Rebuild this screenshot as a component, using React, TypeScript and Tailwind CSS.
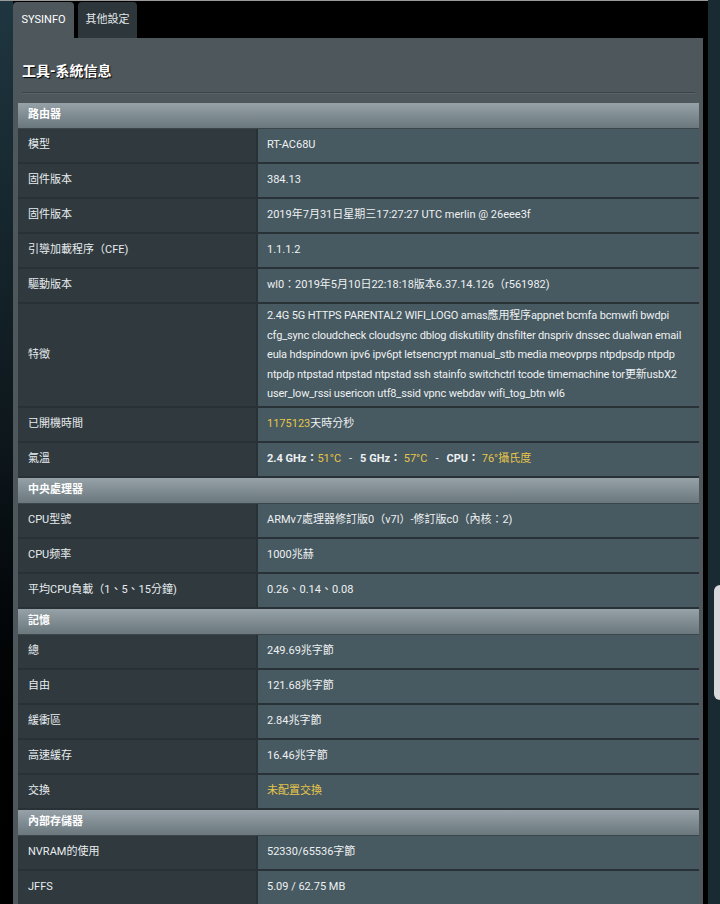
import type { ReactNode } from "react";

type Row = { label: string; value: ReactNode; tall?: boolean };
type Section = { title: string; rows: Row[] };

const Y = ({ children }: { children: ReactNode }) => <span className="text-[#e6c64a]">{children}</span>;

const SECTIONS: Section[] = [
  {
    title: "路由器",
    rows: [
      { label: "模型", value: "RT-AC68U" },
      { label: "固件版本", value: "384.13" },
      { label: "固件版本", value: "2019年7月31日星期三17:27:27 UTC merlin @ 26eee3f" },
      { label: "引導加載程序（CFE)", value: "1.1.1.2" },
      { label: "驅動版本", value: "wl0：2019年5月10日22:18:18版本6.37.14.126（r561982)" },
      {
        label: "特徵",
        tall: true,
        value:
          "2.4G 5G HTTPS PARENTAL2 WIFI_LOGO amas應用程序appnet bcmfa bcmwifi bwdpi cfg_sync cloudcheck cloudsync dblog diskutility dnsfilter dnspriv dnssec dualwan email eula hdspindown ipv6 ipv6pt letsencrypt manual_stb media meovprps ntpdpsdp ntpdp ntpdp ntpstad ntpstad ntpstad ssh stainfo switchctrl tcode timemachine tor更新usbX2 user_low_rssi usericon utf8_ssid vpnc webdav wifi_tog_btn wl6",
      },
      {
        label: "已開機時間",
        value: (
          <>
            <Y>1175123</Y>天時分秒
          </>
        ),
      },
      {
        label: "氣溫",
        value: (
          <>
            <b>2.4 GHz：</b>
            <Y>51°C</Y>
            <span className="px-[8px]">-</span>
            <b>5 GHz：</b>
            <Y> 57°C</Y>
            <span className="px-[8px]">-</span>
            <b>CPU：</b>
            <Y> 76°攝氏度</Y>
          </>
        ),
      },
    ],
  },
  {
    title: "中央處理器",
    rows: [
      { label: "CPU型號", value: "ARMv7處理器修訂版0（v7l）-修訂版c0（內核：2)" },
      { label: "CPU频率", value: "1000兆赫" },
      { label: "平均CPU負載（1、5、15分鐘)", value: "0.26、0.14、0.08" },
    ],
  },
  {
    title: "記憶",
    rows: [
      { label: "總", value: "249.69兆字節" },
      { label: "自由", value: "121.68兆字節" },
      { label: "緩衝區", value: "2.84兆字節" },
      { label: "高速緩存", value: "16.46兆字節" },
      { label: "交換", value: <Y>未配置交換</Y> },
    ],
  },
  {
    title: "內部存儲器",
    rows: [
      { label: "NVRAM的使用", value: "52330/65536字節" },
      { label: "JFFS", value: "5.09 / 62.75 MB" },
    ],
  },
];

function InfoSection({ section }: { section: Section }) {
  return (
    <div>
      <div className="flex h-[26px] items-center border-b border-[#3b464b] bg-gradient-to-b from-[#96a2a8] to-[#6a777d] px-[10px] text-[11px] font-bold text-white">
        {section.title}
      </div>
      {section.rows.map((r, i) => (
        <div key={i} className="flex border-b-2 border-[#283136]">
          <div className="flex w-[238px] shrink-0 items-center bg-[#2f393e] px-[10px] text-[11px] text-[#e8ecee]">
            {r.label}
          </div>
          <div
            className={
              "flex flex-1 items-center border-l-2 border-[#283136] bg-[#475961] pl-[9px] pr-[4px] text-[11px] text-[#eef1f2] " +
              (r.tall ? "h-[102px] leading-[19.6px] tracking-[-0.15px]" : "h-[33px]")
            }
          >
            <div>{r.value}</div>
          </div>
        </div>
      ))}
    </div>
  );
}

export default function App() {
  return (
    <div
      className="relative flex h-[904px] w-[720px] overflow-hidden bg-black"
      style={{ fontFamily: "Roboto, 'Noto Sans CJK TC', sans-serif" }}
    >
      <div className="absolute left-0 right-0 top-0 h-px bg-[#9a9a9a]" />
      <div className="w-[13px] shrink-0 bg-gradient-to-b from-[#1f3640] via-[#0d161b] to-black" />
      <div className="flex w-[690px] shrink-0 flex-col">
        <div className="flex h-[38px] items-end gap-[4px] pt-[2px]">
          <div className="flex h-[36px] w-[61px] items-center justify-center rounded-t-[4px] bg-[#4d575c] text-[11px] text-white">
            SYSINFO
          </div>
          <div className="flex h-[36px] w-[59px] items-center justify-center rounded-t-[4px] bg-[#2d373b] text-[11px] text-[#e5e8ea]">
            其他設定
          </div>
        </div>
        <div className="flex flex-1 flex-col bg-[#4d575c] pl-[5px] pr-[4px]">
          <div className="flex h-[54px] items-end pb-[10px] pl-[4px] text-[14px] font-bold text-white [text-shadow:1px_1px_1px_#000]">
            工具-系統信息
          </div>
          <div className="mx-[4px] h-[2px] border-t border-[#3a4448] bg-[#59646a]" />
          <div className="mt-[9px] flex flex-col">
            {SECTIONS.map((s) => (
              <InfoSection key={s.title} section={s} />
            ))}
          </div>
        </div>
      </div>
      <div className="w-[5px] shrink-0 bg-black" />
      <div className="relative flex-1 bg-[#1a2a33]">
        <div className="absolute right-0 top-[585px] h-[115px] w-[6px] rounded-l-[6px] bg-[#d8dadb]" />
      </div>
    </div>
  );
}
